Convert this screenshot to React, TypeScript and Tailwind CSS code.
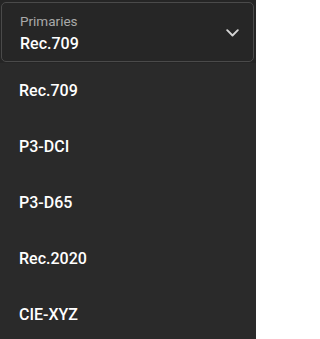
import React from "react";

const items = ["Rec.709", "P3-DCI", "P3-D65", "Rec.2020", "CIE-XYZ"];

export default function App() {
  return (
    <div
      className="w-[256px] h-[339px] overflow-hidden bg-[#252525] flex flex-col"
      style={{ fontFamily: "Roboto, 'Liberation Sans', sans-serif" }}
    >
      <div className="pt-[2px] pl-[1px] pr-[2px]">
        <div className="h-[60px] rounded-[5px] border border-[#4a4a4a] bg-[#262626] flex items-start pl-[18px] pr-[14px]">
          <div className="flex-1 flex flex-col pt-[9px]">
            <span className="text-[13.5px] leading-[18px] text-[#a9a9a9]">Primaries</span>
            <span className="text-[16px] leading-[28px] font-medium text-white">Rec.709</span>
          </div>
          <svg className="mt-[26px]" width="13" height="8" viewBox="0 0 13 8" fill="none" stroke="#d4d4d4" strokeWidth="1.9" strokeLinecap="round" strokeLinejoin="round">
            <path d="M1.2 1.2l5.3 5.3 5.3-5.3" />
          </svg>
        </div>
      </div>
      <div className="mt-[1px] flex-1 bg-[#2a2a2a] flex flex-col">
        {items.map((it) => (
          <div key={it} className="h-[56px] shrink-0 flex items-center pl-[19px] text-[16px] font-medium text-white">
            {it}
          </div>
        ))}
      </div>
    </div>
  );
}
